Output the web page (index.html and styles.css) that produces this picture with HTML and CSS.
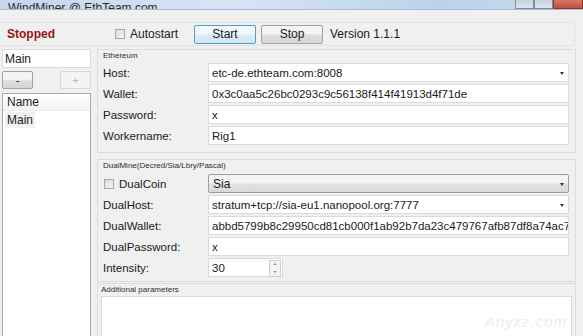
FILE: index.html
```html
<html>
<head>
	<title>WindMiner</title>
	<link rel="stylesheet" href="styles.css">
</head>
<body>
	<div class="window">
		<!-- window caption, mostly cut off at the top of the shot -->
		<div class="titlebar">
			<span class="title">WindMiner @ EthTeam.com</span>
			<div class="caption-buttons">
				<span class="cap"></span>
				<span class="cap"></span>
				<span class="cap close"></span>
			</div>
		</div>

		<div class="toolbar">
			<div class="status">Stopped</div>
			<label class="check autostart"><span class="box"></span>Autostart</label>
			<div class="button focused">Start</div>
			<div class="button">Stop</div>
			<div class="version">Version 1.1.1</div>
		</div>

		<div class="main">
			<div class="sidebar">
				<div class="input">Main</div>
				<div class="side-buttons">
					<div class="button small">-</div>
					<div class="button small disabled">+</div>
				</div>
				<div class="listbox">
					<div class="list-header">Name</div>
					<div class="list-item"><span>Main</span></div>
				</div>
			</div>

			<div class="settings">
				<div class="group">
					<div class="group-title">Ethereum</div>
					<div class="form">
						<div class="label">Host:</div>
						<div class="input combo">etc-de.ethteam.com:8008<span class="arrow"></span></div>
						<div class="label">Wallet:</div>
						<div class="input">0x3c0aa5c26bc0293c9c56138f414f41913d4f71de</div>
						<div class="label">Password:</div>
						<div class="input">x</div>
						<div class="label">Workername:</div>
						<div class="input">Rig1</div>
					</div>
				</div>

				<div class="group dual">
					<div class="group-title">DualMine(Decred/Sia/Lbry/Pascal)</div>
					<div class="form">
						<label class="check label"><span class="box"></span>DualCoin</label>
						<div class="select">Sia<span class="arrow"></span></div>
						<div class="label">DualHost:</div>
						<div class="input combo">stratum+tcp://sia-eu1.nanopool.org:7777<span class="arrow"></span></div>
						<div class="label">DualWallet:</div>
						<div class="input clip">abbd5799b8c29950cd81cb000f1ab92b7da23c479767afb87df8a74ac7</div>
						<div class="label">DualPassword:</div>
						<div class="input">x</div>
						<div class="label">Intensity:</div>
						<div class="input numeric">30<span class="spin"><span class="up"></span><span class="down"></span></span></div>
					</div>
				</div>

				<div class="group extra">
					<div class="group-title">Additional parameters</div>
					<div class="textarea">
						<span class="watermark">Anyxz.com</span>
					</div>
				</div>
			</div>
		</div>
	</div>
</body>
</html>
```

FILE: styles.css
```css
html {
	margin: 0;
	padding: 0;
}

body {
	margin: 0;
	padding: 0;
	width: 583px;
	height: 336px;
	overflow: hidden;
	background-color: #f0f0f0;
	font-family: "Liberation Sans", Arial, sans-serif;
	font-size: 11.5px;
	color: #1a1a1a;
}

.window {
	width: 583px;
	height: 336px;
	display: flex;
	flex-direction: column;
}

.titlebar {
	height: 9px;
	flex: none;
	display: flex;
	align-items: flex-end;
	overflow: hidden;
	background: linear-gradient(to right, #c4d7ec, #d6e5f4 40%, #bcd2ea 75%, #c9dbee);
	border-bottom: 1px solid #a9bcd3;
}

.title {
	margin-left: 8px;
	margin-bottom: -6px;
	font-size: 12px;
	line-height: 14px;
	color: #2a2a2a;
}

.caption-buttons {
	margin-left: auto;
	display: flex;
	height: 9px;
}

.cap {
	width: 17px;
	height: 8px;
	border: 1px solid #7d8ea3;
	border-top: none;
	background: linear-gradient(#c6d2df, #dfe6ee);
}

.close {
	width: 28px;
	border-color: #8b3a2c;
	background: linear-gradient(#d47a66, #c0503a);
}

.toolbar {
	flex: none;
	margin-top: 12px;
	width: 575px;
	height: 24px;
	border: 1px solid #e3e3e3;
	border-left: none;
	display: flex;
	align-items: center;
	padding-left: 7px;
	box-sizing: border-box;
}

.status {
	width: 108px;
	font-weight: bold;
	font-size: 12px;
	color: #9c1418;
}

.check {
	display: flex;
	align-items: center;
	font-size: 12px;
}

.box {
	width: 8px;
	height: 8px;
	border: 1px solid #a8a8a8;
	background: linear-gradient(135deg, #dadada, #f6f6f6);
	margin-right: 5px;
}

.autostart {
	width: 79px;
}

.button {
	width: 62px;
	height: 19px;
	box-sizing: border-box;
	border: 1px solid #a3a3a3;
	border-radius: 2px;
	background: linear-gradient(#f4f4f4 45%, #dedede 55%, #d6d6d6);
	display: flex;
	align-items: center;
	justify-content: center;
	font-size: 12px;
	margin-right: 5px;
}

.focused {
	border-color: #4d9fd1;
	background: linear-gradient(#f1f7fb 45%, #dcebf5 55%, #d2e5f2);
}

.version {
	margin-left: 2px;
	font-size: 12px;
}

.main {
	flex: 1;
	display: flex;
	padding-left: 2px;
	padding-top: 3px;
	min-height: 0;
}

.sidebar {
	width: 89px;
	display: flex;
	flex-direction: column;
}

.input {
	height: 19px;
	box-sizing: border-box;
	border: 1px solid #dadada;
	background-color: white;
	padding-left: 3px;
	display: flex;
	align-items: center;
	font-size: 11.5px;
	position: relative;
	white-space: nowrap;
}

.sidebar .input {
	font-size: 12px;
	padding-left: 2px;
}

.side-buttons {
	margin-top: 3px;
	display: flex;
	justify-content: space-between;
}

.small {
	width: 31px;
	height: 18px;
	margin: 0;
	font-size: 11px;
}

.disabled {
	background: #f4f4f4;
	border-color: #d9d9d9;
	color: #b5b5b5;
}

.listbox {
	margin-top: 4px;
	flex: 1;
	background-color: white;
	border: 1px solid #a9a9a9;
	border-bottom: none;
	font-size: 12px;
}

.list-header {
	height: 16px;
	padding-left: 4px;
	display: flex;
	align-items: center;
	background: linear-gradient(white, #f3f3f3);
	border-bottom: 1px solid #ececec;
}

.list-item {
	height: 17px;
	padding-left: 2px;
	display: flex;
	align-items: center;
}

.list-item span {
	background-color: #f1f1f1;
	padding: 1px 2px;
}

.settings {
	margin-left: 6px;
	width: 479px;
	display: flex;
	flex-direction: column;
}

.group {
	border: 1px solid #dcdcdc;
	padding: 1px 6px 7px 5px;
}

.group-title {
	font-size: 8px;
	height: 11px;
	line-height: 10px;
	color: #2e2e2e;
}

.form {
	display: grid;
	grid-template-columns: 105px 361px;
	grid-auto-rows: 19px;
	row-gap: 2px;
	margin-top: 1px;
}

.label {
	display: flex;
	align-items: center;
	font-size: 11.5px;
}

.dual {
	margin-top: 6px;
	padding-bottom: 4px;
}

.dual .form {
	margin-top: 2px;
}

.dual .check {
	padding-left: 1px;
}

.select {
	height: 19px;
	box-sizing: border-box;
	border: 1px solid #9c9c9c;
	border-radius: 2px;
	background: linear-gradient(#f3f3f3 45%, #e2e2e2 55%, #d9d9d9);
	padding-left: 4px;
	display: flex;
	align-items: center;
	font-size: 12px;
	position: relative;
}

.arrow {
	position: absolute;
	right: 4px;
	top: 8px;
	border-left: 2.5px solid transparent;
	border-right: 2.5px solid transparent;
	border-top: 3px solid #333;
}

.clip {
	overflow: hidden;
}

.numeric {
	width: 75px;
}

.spin {
	position: absolute;
	right: 1px;
	top: 1px;
	width: 10px;
	height: 15px;
	display: flex;
	flex-direction: column;
	border: 1px solid #d0d0d0;
	background: #f3f3f3;
}

.spin span {
	flex: 1;
	position: relative;
}

.up::after,
.down::after {
	content: "";
	position: absolute;
	left: 3px;
	top: 2px;
	border-left: 2px solid transparent;
	border-right: 2px solid transparent;
}

.up::after {
	border-bottom: 2px solid #9a9a9a;
}

.down::after {
	border-top: 2px solid #9a9a9a;
}

.extra {
	margin-top: 1px;
	flex: 1;
	padding: 1px 3px 0 3px;
	border-bottom: none;
	display: flex;
	flex-direction: column;
}

.extra .group-title {
	height: 11px;
}

.textarea {
	flex: 1;
	background-color: white;
	border: 1px solid #dadada;
	border-bottom: none;
	position: relative;
}

.watermark {
	position: absolute;
	right: 4px;
	bottom: 6px;
	font-size: 15px;
	font-style: italic;
	letter-spacing: 1px;
	color: #ededed;
}
```
